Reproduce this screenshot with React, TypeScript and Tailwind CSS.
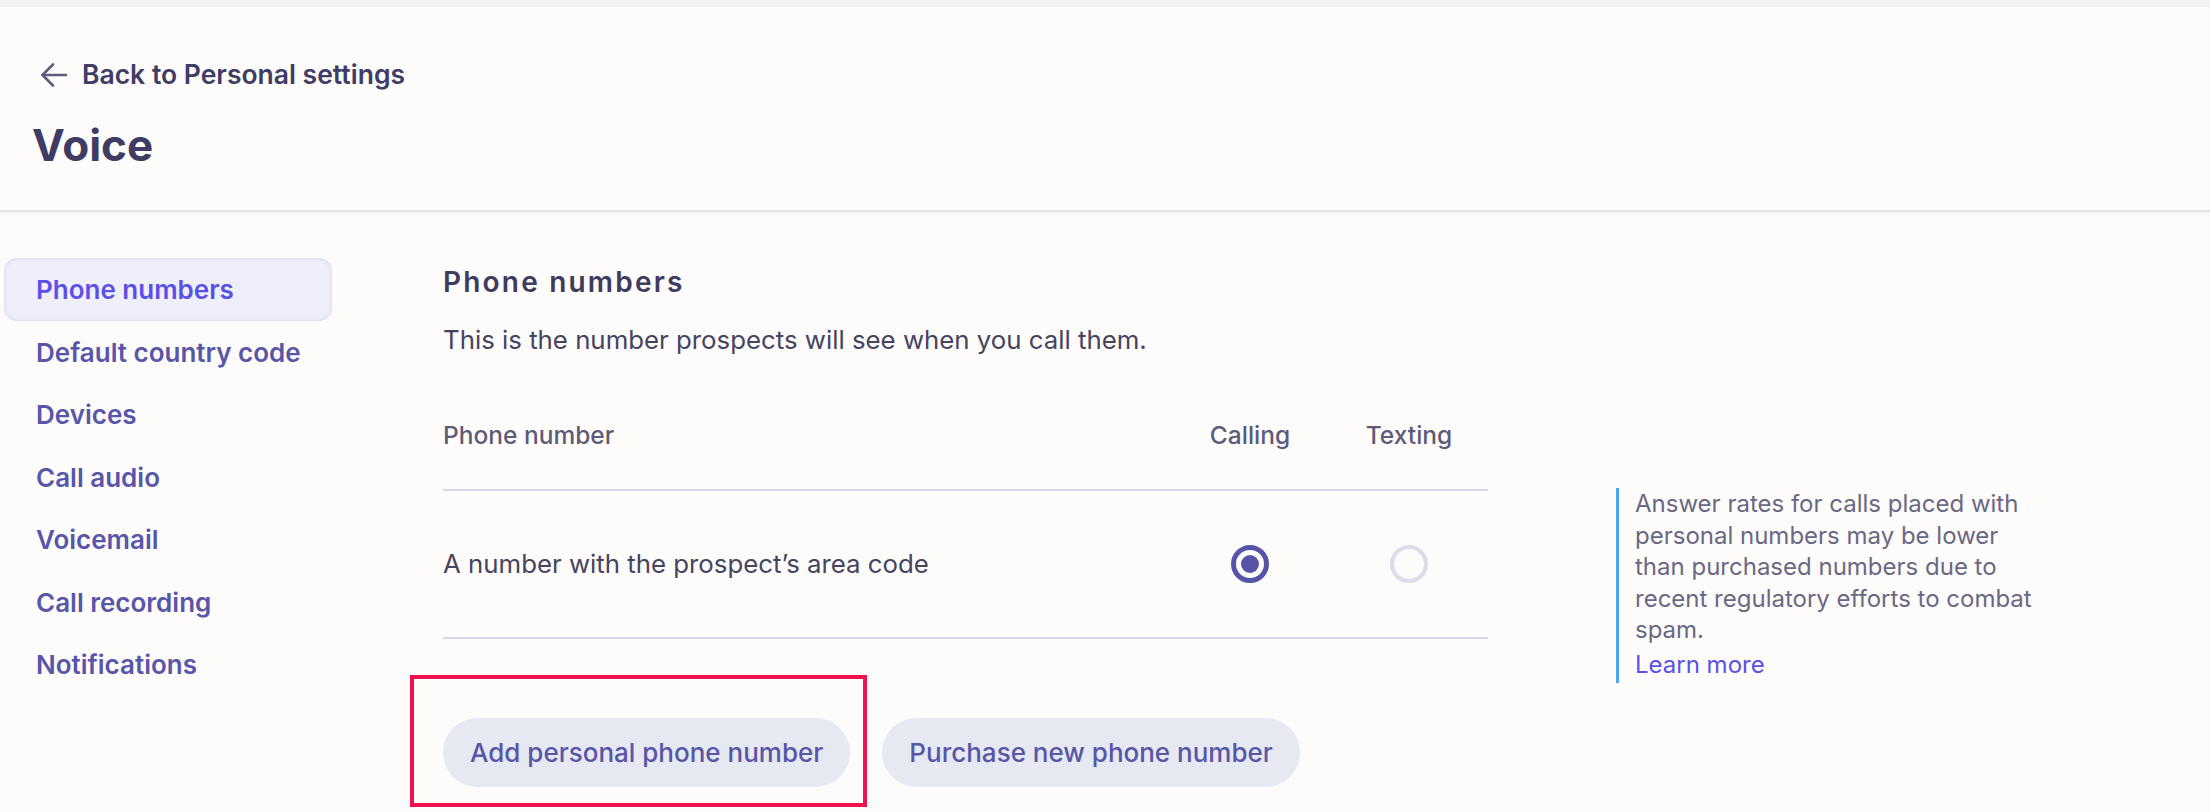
import React from "react";

const navItems = [
  "Phone numbers",
  "Default country code",
  "Devices",
  "Call audio",
  "Voicemail",
  "Call recording",
  "Notifications",
];

function Radio({ checked }: { checked: boolean }) {
  if (checked) {
    return (
      <span className="flex h-[38px] w-[38px] items-center justify-center rounded-full border-[5px] border-[#5654a8]">
        <span className="h-[18px] w-[18px] rounded-full bg-[#5654a8]" />
      </span>
    );
  }
  return <span className="block h-[38px] w-[38px] rounded-full border-[4px] border-[#dddbe6]" />;
}

export default function App() {
  return (
    <div
      className="min-h-[812px] w-full bg-[#fdfcfb] text-[#3e3c64]"
      style={{ fontFamily: "Inter, 'Noto Sans', sans-serif" }}
    >
      <div className="h-[7px] bg-[#f4f2f2]" />
      <header className="border-b-2 border-[#e2e0e0] pl-[32px] pt-[50px] pb-[37px] shadow-[0_2px_3px_rgba(0,0,0,0.03)]">
        <a className="flex h-[36px] items-center gap-[14px] pl-[8px] text-[26.5px] font-semibold text-[#3f3d66]">
          <svg width="28" height="26" viewBox="0 0 28 26" fill="none" stroke="#5f5d7e" strokeWidth="2.6" strokeLinecap="round" strokeLinejoin="round">
            <path d="M26 13H2.5" />
            <path d="M13 2.5 2.5 13 13 23.5" />
          </svg>
          <span>Back to Personal settings</span>
        </a>
        <h1 className="mt-[24px] h-[56px] text-[44px] leading-[56px] font-bold text-[#3e3c64]">Voice</h1>
      </header>

      <div className="flex">
        <nav className="w-[443px] shrink-0 pt-[46px] pl-[4px]">
          <ul className="w-[328px]">
            {navItems.map((item, i) => (
              <li
                key={item}
                className={
                  i === 0
                    ? "flex h-[63px] items-center rounded-[13px] bg-[#efeffb] pl-[32px] text-[26px] font-semibold text-[#5b50e6] shadow-[inset_0_0_4px_rgba(120,118,200,0.25)]"
                    : "flex h-[62.5px] items-center pl-[32px] text-[26px] font-semibold text-[#5856a8]"
                }
              >
                {item}
              </li>
            ))}
          </ul>
        </nav>

        <main className="flex-1 pt-[52px]">
          <h2 className="h-[36px] text-[28px] leading-[36px] font-semibold tracking-[2.2px] text-[#3d3b5e]">
            Phone numbers
          </h2>
          <p className="mt-[22px] h-[36px] text-[25.8px] leading-[36px] text-[#46445f]">
            This is the number prospects will see when you call them.
          </p>

          <div className="mt-[59px] flex">
            <div className="w-[1045px] shrink-0">
              <div className="flex border-b-2 border-[#d8d6e6] pb-[36px] text-[24.5px] leading-[36px] font-medium text-[#5d5b78]">
                <div className="flex-1">Phone number</div>
                <div className="w-[160px] text-center">Calling</div>
                <div className="w-[158px] text-center">Texting</div>
              </div>
              <div className="flex h-[148px] items-center border-b-2 border-[#d8d6e6] text-[25.8px] text-[#46445f]">
                <div className="flex-1">A number with the prospect’s area code</div>
                <div className="flex w-[160px] justify-center">
                  <Radio checked />
                </div>
                <div className="flex w-[158px] justify-center">
                  <Radio checked={false} />
                </div>
              </div>

              <div className="mt-[79px] flex gap-[32px]">
                <div className="relative">
                  <button className="h-[69px] rounded-full bg-[#e6e8f2] px-[27px] text-[26px] font-medium text-[#5856a6]">
                    Add personal phone number
                  </button>
                  <span className="pointer-events-none absolute -top-[43px] -left-[33px] -right-[17px] -bottom-[20px] border-[4px] border-[#f0124f]" />
                </div>
                <button className="h-[69px] rounded-full bg-[#e6e8f2] px-[27px] text-[26px] font-medium text-[#5856a6]">
                  Purchase new phone number
                </button>
              </div>
            </div>

            <aside className="mt-[71px] ml-[128px] h-[195px] border-l-[3px] border-[#4ba9f2] pl-[16px] text-[24px] leading-[31.5px] text-[#6a6883]">
              <span className="block whitespace-nowrap">Answer rates for calls placed with</span>
              <span className="block whitespace-nowrap">personal numbers may be lower</span>
              <span className="block whitespace-nowrap">than purchased numbers due to</span>
              <span className="block whitespace-nowrap">recent regulatory efforts to combat</span>
              <span className="block whitespace-nowrap">spam.</span>
              <a className="mt-[3px] block text-[#5b50e8]">Learn more</a>
            </aside>
          </div>
        </main>
      </div>
    </div>
  );
}
